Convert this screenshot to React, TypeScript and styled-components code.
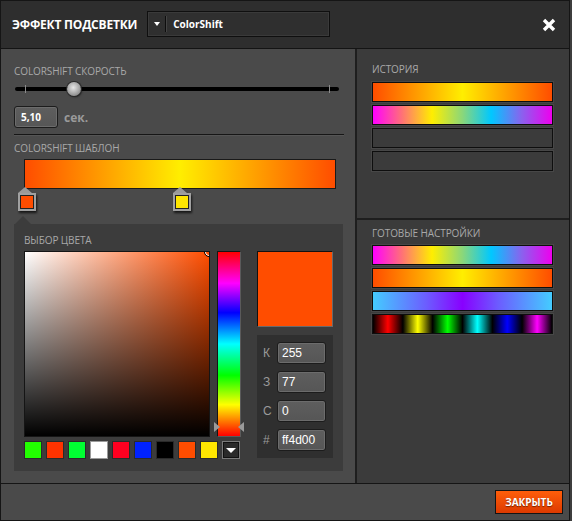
import * as React from "react"
import styled, { createGlobalStyle } from "styled-components"

const GlobalStyle = createGlobalStyle`
    html, body {
        margin: 0;
        padding: 0;
        background: #3d3d3d;
    }
    body {
        font-family: "Open Sans", "Liberation Sans", sans-serif;
    }
    * {
        box-sizing: border-box;
    }
`

const FIRE = "linear-gradient(to right, #ff4d00 0%, #ffee00 50%, #ff4d00 100%)"
const RAINBOW =
    "linear-gradient(to right, #ff00ff 0%, #ff7078 16%, #ffee00 33%, #8ad77a 50%, #00c8ff 66%, #8a62ee 83%, #ee00ee 100%)"
const ICE =
    "linear-gradient(to right, #44ccff 0%, #6c5cff 30%, #8800ff 50%, #6c5cff 70%, #44ccff 100%)"
const PULSE =
    "linear-gradient(to right, #000 0%, #ff0000 8.3%, #000 16.7%, #ffff00 25%, #000 33.3%, #00ff00 41.7%, #000 50%, #00ffff 58.3%, #000 66.7%, #0000ff 75%, #000 83.3%, #ff00ff 91.7%, #000 100%)"

const Frame = styled.div`
    width: 570px;
    height: 521px;
    border: 1px solid #151515;
    display: flex;
    flex-direction: column;
    background: #4a4a4a;
`

const Header = styled.div`
    height: 48px;
    flex: none;
    background: #2e2e2e;
    border-bottom: 1px solid #141414;
    display: flex;
    align-items: center;
    padding: 0 12px 0 11px;
`

const Title = styled.div`
    color: #ffffff;
    font-weight: 700;
    font-size: 12px;
    letter-spacing: -0.2px;
    margin-right: 10px;
`

const Dropdown = styled.div`
    width: 183px;
    height: 26px;
    margin-top: -2px;
    background: #2f2f2f;
    border: 1px solid #0f0f0f;
    box-shadow: inset 0 0 0 1px #3a3a3a;
    display: flex;
    align-items: center;
`

const DropArrow = styled.div`
    width: 17px;
    display: flex;
    justify-content: center;
    &::before {
        content: "";
        border-left: 3px solid transparent;
        border-right: 3px solid transparent;
        border-top: 4px solid #ffffff;
    }
`

const DropSep = styled.div`
    width: 1px;
    height: 16px;
    background: #0d0d0d;
    box-shadow: 1px 0 0 #444;
    margin-right: 7px;
`

const DropText = styled.div`
    color: #ffffff;
    font-weight: 700;
    font-size: 10px;
`

const Spacer = styled.div`
    flex: 1;
`

const CloseIcon = styled.svg`
    width: 14px;
    height: 14px;
    margin-right: 1px;
`

const Body = styled.div`
    flex: 1;
    display: flex;
    min-height: 0;
`

const LeftPanel = styled.div`
    width: 354px;
    flex: none;
    background: #4a4a4a;
    padding: 15px 0 0 13px;
    display: flex;
    flex-direction: column;
`

const VDivider = styled.div`
    width: 2px;
    flex: none;
    background: #1e1e1e;
`

const RightPanel = styled.div`
    flex: 1;
    background: #3b3b3b;
    display: flex;
    flex-direction: column;
`

const Label = styled.div`
    color: #a8a8a8;
    font-size: 10px;
    line-height: 14px;
    height: 14px;
    text-transform: uppercase;
    letter-spacing: -0.1px;
`

const SliderRow = styled.div`
    position: relative;
    width: 324px;
    height: 14px;
    margin-top: 4px;
    margin-left: 1px;
    display: flex;
    align-items: center;
`

const Track = styled.div`
    width: 100%;
    height: 4px;
    border-radius: 2px;
    background: #000000;
`

const Tick = styled.div<{ $left: number }>`
    position: absolute;
    left: ${p => p.$left}px;
    top: 3px;
    width: 1px;
    height: 8px;
    background: #8a8a8a;
`

const Thumb = styled.div<{ $left: number }>`
    position: absolute;
    left: ${p => p.$left}px;
    top: 0;
    width: 14px;
    height: 14px;
    border-radius: 50%;
    background: radial-gradient(circle at 45% 40%, #e6e6e6 0%, #b0b0b0 45%, #6c6c6c 100%);
    box-shadow: 0 0 0 1px #2a2a2a, 1px 1px 2px rgba(0, 0, 0, 0.6);
`

const ValueRow = styled.div`
    display: flex;
    align-items: center;
    margin-top: 10px;
`

const NumberBox = styled.div<{ $width: number; $bold?: boolean }>`
    width: ${p => p.$width}px;
    height: 22px;
    border: 1px solid #1c1c1c;
    border-radius: 3px;
    background: linear-gradient(to bottom, #5e5e5e, #565656);
    box-shadow: inset 0 0 0 1px #6c6c6c;
    color: #ffffff;
    font-family: ${p => (p.$bold ? '"Open Sans", sans-serif' : '"Liberation Sans", Arial, sans-serif')};
    font-size: ${p => (p.$bold ? 10 : 12)}px;
    font-weight: ${p => (p.$bold ? 700 : 400)};
    line-height: 20px;
    padding-left: ${p => (p.$bold ? 6 : 4)}px;
`

const Unit = styled.div`
    color: #9a9a9a;
    font-weight: 700;
    font-size: 12px;
    margin-left: 6px;
`

const HLine = styled.div`
    width: 330px;
    height: 1px;
    background: #161616;
    box-shadow: 0 1px 0 #555;
    margin-top: 6px;
    margin-bottom: 6px;
`

const Template = styled.div`
    position: relative;
    margin-top: 4px;
    margin-left: 10px;
    width: 312px;
    height: 50px;
`

const TemplateBar = styled.div`
    width: 312px;
    height: 30px;
    border: 1px solid #1a1a1a;
    background: ${FIRE};
`

const Stop = styled.div<{ $left: number; $color: string }>`
    position: absolute;
    left: ${p => p.$left}px;
    top: 28px;
    width: 14px;
    height: 21px;
    filter: drop-shadow(1px 2px 1px rgba(0, 0, 0, 0.7));
    &::before {
        content: "";
        position: absolute;
        left: 0;
        top: 0;
        border-left: 7px solid transparent;
        border-right: 7px solid transparent;
        border-bottom: 6px solid #9a9a9a;
    }
    &::after {
        content: "";
        position: absolute;
        left: 0;
        top: 6px;
        width: 14px;
        height: 14px;
        border: 2px solid #a0a0a0;
        box-shadow: inset 0 0 0 1px #222;
        background: ${p => p.$color};
    }
`

const Picker = styled.div`
    position: relative;
    width: 329px;
    margin-top: 15px;
    background: #3c3c3c;
    padding: 9px 0 12px 10px;
    display: flex;
    &::before {
        content: "";
        position: absolute;
        left: 1px;
        top: -8px;
        border-left: 8px solid transparent;
        border-right: 8px solid transparent;
        border-bottom: 8px solid #3c3c3c;
    }
`

const PickerLeft = styled.div`
    display: flex;
    flex-direction: column;
`

const PickerMain = styled.div`
    display: flex;
    gap: 7px;
    margin-top: 4px;
`

const SatBox = styled.div`
    position: relative;
    width: 186px;
    height: 186px;
    border: 1px solid #151515;
    overflow: hidden;
    background: linear-gradient(to top, #000000, rgba(0, 0, 0, 0)),
        linear-gradient(to right, #ffffff, #ff4d00);
`

const SatMarker = styled.div`
    position: absolute;
    right: -5px;
    top: -5px;
    width: 10px;
    height: 10px;
    border-radius: 50%;
    border: 1px solid #000;
    box-shadow: inset 0 0 0 1px #fff;
`

const HueBar = styled.div`
    position: relative;
    width: 24px;
    height: 186px;
    border: 1px solid #151515;
    border-right-color: #5a5a5a;
    border-bottom-color: #5a5a5a;
    background: linear-gradient(
        to bottom,
        #ff0000 0%,
        #ff00ff 17%,
        #0000ff 33%,
        #00ffff 50%,
        #00ff00 67%,
        #ffff00 83%,
        #ff0000 100%
    );
    &::before {
        content: "";
        position: absolute;
        left: -4px;
        top: 170px;
        border-top: 5px solid transparent;
        border-bottom: 5px solid transparent;
        border-left: 6px solid #9a9a9a;
    }
    &::after {
        content: "";
        position: absolute;
        right: -4px;
        top: 170px;
        border-top: 5px solid transparent;
        border-bottom: 5px solid transparent;
        border-right: 6px solid #9a9a9a;
    }
`

const SwatchRow = styled.div`
    display: flex;
    gap: 4px;
    margin-top: 4px;
`

const Swatch = styled.div<{ $color: string }>`
    width: 18px;
    height: 18px;
    background: ${p => p.$color};
    border: 1px solid ${p => (p.$color === "#ffffff" ? "#9a9a9a" : "#2a2a2a")};
`

const SwatchMenu = styled.div`
    width: 18px;
    height: 18px;
    background: #2a2a2a;
    border: 1px solid #7a7a7a;
    box-shadow: inset 0 0 0 1px #111;
    display: flex;
    align-items: center;
    justify-content: center;
    &::before {
        content: "";
        border-left: 5px solid transparent;
        border-right: 5px solid transparent;
        border-top: 5px solid #ffffff;
    }
`

const PickerRight = styled.div`
    display: flex;
    flex-direction: column;
    margin-left: 16px;
    margin-top: 18px;
    gap: 8px;
`

const Preview = styled.div`
    width: 76px;
    height: 76px;
    background: #ff4d00;
    border: 1px solid #111;
    border-right-color: #6a6a6a;
    border-bottom-color: #6a6a6a;
`

const RgbPanel = styled.div`
    width: 76px;
    background: #2f2f2f;
    padding: 7px 7px 7px 6px;
    display: flex;
    flex-direction: column;
    gap: 7px;
`

const RgbRow = styled.div`
    display: flex;
    align-items: center;
`

const RgbLabel = styled.div`
    width: 14px;
    color: #9a9a9a;
    font-family: "Liberation Sans", Arial, sans-serif;
    font-size: 12px;
`

const Section = styled.div<{ $top: number; $height?: number }>`
    padding: ${p => p.$top}px 0 0 15px;
    ${p => (p.$height ? `height: ${p.$height}px; flex: none;` : "flex: 1;")}
`

const HDivider = styled.div`
    height: 2px;
    flex: none;
    background: #1e1e1e;
`

const BarList = styled.div<{ $gapTop: number }>`
    display: flex;
    flex-direction: column;
    gap: 3px;
    margin-top: ${p => p.$gapTop}px;
`

const GradientBar = styled.div<{ $fill?: string }>`
    width: 181px;
    height: 20px;
    border: 1px solid #0e0e0e;
    box-shadow: 0 0 0 1px #474747;
    background: ${p => p.$fill || "#3b3b3b"};
`

const Footer = styled.div`
    height: 37px;
    flex: none;
    border-top: 1px solid #151515;
    background: #4a4a4a;
    display: flex;
    align-items: center;
    justify-content: flex-end;
    padding-right: 6px;
`

const Button = styled.div`
    width: 68px;
    height: 24px;
    border: 1px solid #141414;
    background: linear-gradient(to bottom, #ff5e0a, #dd3a00);
    color: #ffffff;
    font-size: 10px;
    font-weight: 700;
    text-shadow: 0 1px 1px rgba(0, 0, 0, 0.5);
    display: flex;
    align-items: center;
    justify-content: center;
`

const SWATCHES = [
    "#22ff00",
    "#ff3300",
    "#00ff33",
    "#ffffff",
    "#ff0020",
    "#0022ff",
    "#000000",
    "#ff4d00",
    "#ffe600",
]

const RGB = [
    { label: "К", value: "255" },
    { label: "З", value: "77" },
    { label: "С", value: "0" },
    { label: "#", value: "ff4d00" },
]

export default function App() {
    return (
        <>
            <GlobalStyle />
            <Frame>
                <Header>
                    <Title>ЭФФЕКТ ПОДСВЕТКИ</Title>
                    <Dropdown>
                        <DropArrow />
                        <DropSep />
                        <DropText>ColorShift</DropText>
                    </Dropdown>
                    <Spacer />
                    <CloseIcon viewBox="0 0 14 14">
                        <path d="M2 2 L12 12 M12 2 L2 12" stroke="#ffffff" strokeWidth="3.4" />
                    </CloseIcon>
                </Header>
                <Body>
                    <LeftPanel>
                        <Label>ColorShift скорость</Label>
                        <SliderRow>
                            <Track />
                            <Tick $left={10} />
                            <Tick $left={314} />
                            <Thumb $left={52} />
                        </SliderRow>
                        <ValueRow>
                            <NumberBox $width={44} $bold>
                                5,10
                            </NumberBox>
                            <Unit>сек.</Unit>
                        </ValueRow>
                        <HLine />
                        <Label>ColorShift шаблон</Label>
                        <Template>
                            <TemplateBar />
                            <Stop $left={-6} $color="#ff4d00" />
                            <Stop $left={149} $color="#ffe600" />
                        </Template>
                        <Picker>
                            <PickerLeft>
                                <Label>Выбор цвета</Label>
                                <PickerMain>
                                    <SatBox>
                                        <SatMarker />
                                    </SatBox>
                                    <HueBar />
                                </PickerMain>
                                <SwatchRow>
                                    {SWATCHES.map((c, i) => (
                                        <Swatch key={i} $color={c} />
                                    ))}
                                    <SwatchMenu />
                                </SwatchRow>
                            </PickerLeft>
                            <PickerRight>
                                <Preview />
                                <RgbPanel>
                                    {RGB.map(r => (
                                        <RgbRow key={r.label}>
                                            <RgbLabel>{r.label}</RgbLabel>
                                            <NumberBox $width={49}>{r.value}</NumberBox>
                                        </RgbRow>
                                    ))}
                                </RgbPanel>
                            </PickerRight>
                        </Picker>
                    </LeftPanel>
                    <VDivider />
                    <RightPanel>
                        <Section $top={13} $height={169}>
                            <Label>История</Label>
                            <BarList $gapTop={6}>
                                <GradientBar $fill={FIRE} />
                                <GradientBar $fill={RAINBOW} />
                                <GradientBar />
                                <GradientBar />
                            </BarList>
                        </Section>
                        <HDivider />
                        <Section $top={6}>
                            <Label>Готовые настройки</Label>
                            <BarList $gapTop={5}>
                                <GradientBar $fill={RAINBOW} />
                                <GradientBar $fill={FIRE} />
                                <GradientBar $fill={ICE} />
                                <GradientBar $fill={PULSE} />
                            </BarList>
                        </Section>
                    </RightPanel>
                </Body>
                <Footer>
                    <Button>ЗАКРЫТЬ</Button>
                </Footer>
            </Frame>
        </>
    )
}
